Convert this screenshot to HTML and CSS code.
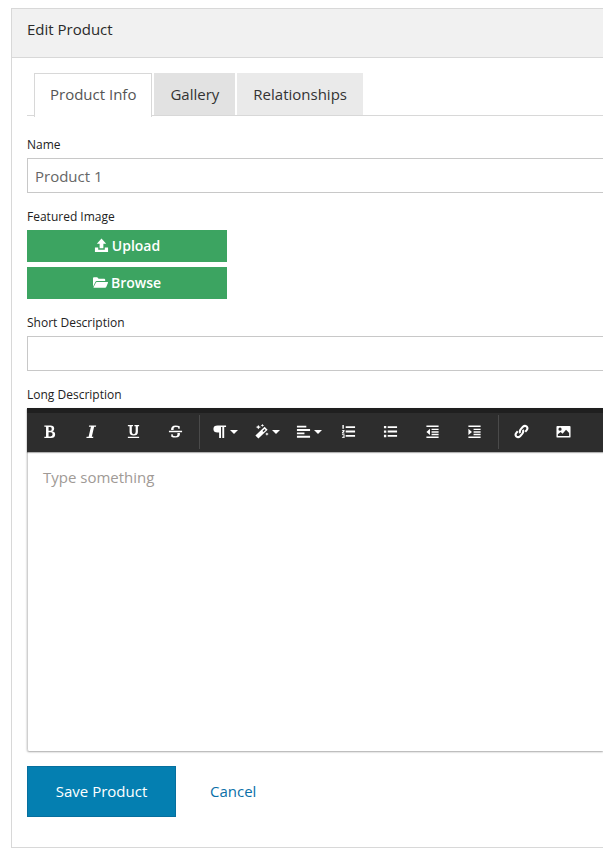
FILE: index.html
```html
<!DOCTYPE html>
<html lang="en">

<head>
  <meta charset="UTF-8" />
  <title>Edit Product</title>
  <link rel="stylesheet" href="styles.css">
</head>

<body>

  <div class="panel">
    <div class="panel-head">Edit Product</div>
    <div class="panel-body">

      <ul class="tabs">
        <li class="tab active">Product Info</li>
        <li class="tab dark">Gallery</li>
        <li class="tab">Relationships</li>
      </ul>

      <label class="field-label name-label">Name</label>
      <input class="text-input" type="text" value="Product 1">

      <label class="field-label featured-label">Featured Image</label>
      <button class="green-btn">
        <svg class="btn-icon" viewBox="0 0 16 16"><path d="M8 .5 13 6H10V11H6V6H3ZM1 10H4.500V12.500H11.500V10H15V15H1Z" fill="#fff"/></svg>
        Upload
      </button>
      <button class="green-btn second">
        <svg class="btn-icon" viewBox="0 0 16 16"><path d="M0 12.500V3.500Q0 2.500 1 2.500H4.500L6 4H12Q13 4 13 5V6.500H4Q3 6.500 2.500 7.500ZM4 7.500H15.500Q16.300 7.500 16 8.300L14 13Q13.700 13.500 13 13.500H1Q.4 13.500 .7 12.900L3 8.200Q3.300 7.500 4 7.500Z" fill="#fff"/></svg>
        Browse
      </button>

      <label class="field-label short-label">Short Description</label>
      <input class="text-input" type="text">

      <label class="field-label long-label">Long Description</label>
      <div class="editor">
        <div class="toolbar">
          <span class="tool"><svg viewBox="0 0 16 16"><path d="M2.500 1.500H9Q13 1.500 13 5Q13 7.200 11 7.800Q14 8.400 14 11.200Q14 15 9.500 15H2.500V13.500H4.300V3H2.500ZM7 3.200V7.200H8.700Q10.400 7.200 10.400 5.200Q10.400 3.200 8.700 3.200ZM7 8.800V13.300H9.200Q11.300 13.300 11.300 11Q11.300 8.800 9.200 8.800Z" fill="#fff" fill-rule="evenodd"/></svg></span>
          <span class="tool"><svg viewBox="0 0 16 16"><path d="M5.500 1.500H13L12.700 3H10.800L8.300 13.500H10L9.700 15H2.500L2.800 13.500H4.900L7.400 3H5.200Z" fill="#fff"/></svg></span>
          <span class="tool"><svg viewBox="0 0 16 16"><path d="M2 1H7.500V2.400H6.200V8.500Q6.200 10.800 8.200 10.800Q10.300 10.800 10.300 8.500V2.400H9V1H14V2.400H12.700V8.500Q12.700 12.300 8.200 12.300Q3.800 12.300 3.800 8.500V2.400H2ZM2 13.500H14V15H2Z" fill="#fff"/></svg></span>
          <span class="tool"><svg viewBox="0 0 16 16"><path d="M1 7.300H15V8.700H1ZM3.300 6.500Q2.800 1.500 8.200 1.500Q10.800 1.500 12.500 2.400V5H11L10.700 3.500Q9.500 3.100 8.200 3.100Q5.500 3.100 6 6.500ZM10 9.700H12.700Q13.300 14.500 8 14.500Q5.300 14.500 3.500 13.600V11H5L5.300 12.500Q6.600 13 8 13Q10.700 13 10 9.700Z" fill="#fff"/></svg></span>
          <span class="divider"></span>
          <span class="tool drop"><svg viewBox="0 0 16 16"><path d="M6 1.500H15V3.300H13V15H11V3.300H9.600V15H7.600V9H6Q1.500 9 1.500 5.200Q1.500 1.500 6 1.500Z" fill="#fff"/></svg><i class="caret"></i></span>
          <span class="tool drop"><svg viewBox="0 0 16 16"><path d="M11.300 3 14.500 6.200 4.700 15.500 1.500 12.300ZM11.300 5.200 9 7.400 10.100 8.500 12.400 6.300ZM4.500 1 5.700 2.700 7.500 3.200 5.700 3.900 4.500 5.500 3.600 3.900 1.800 3.200 3.600 2.700ZM9 0 9.700 1 10.800 1.500 9.700 2 9 3 8.300 2 7.200 1.500 8.300 1ZM13.800 9 14.500 10.100 15.700 10.700 14.500 11.200 13.800 12.400 13.100 11.200 11.900 10.700 13.100 10.100Z" fill="#fff" fill-rule="evenodd"/></svg><i class="caret"></i></span>
          <span class="tool drop tight"><svg viewBox="0 0 16 16"><path d="M1 1.800H11V3.800H1ZM1 5.400H15V7.400H1ZM1 9H9V11H1ZM1 12.600H15V14.600H1Z" fill="#fff"/></svg><i class="caret"></i></span>
          <span class="tool"><svg viewBox="0 0 16 16"><path d="M5 2.300H15V4.300H5ZM5 7H15V9H5ZM5 11.700H15V13.700H5ZM1.500 1H3V5H1.500ZM1 6.300H3.800V7.800L2.500 9.200H3.800V10H1V9L2.500 7.300H1ZM1 11H3.800V15H1V14.200H2.800V13.400H1.800V12.600H2.800V11.800H1Z" fill="#fff"/></svg></span>
          <span class="tool"><svg viewBox="0 0 16 16"><path d="M5 2.300H15V4.300H5ZM5 7H15V9H5ZM5 11.700H15V13.700H5ZM1 2H3.500V4.500H1ZM1 6.800H3.500V9.300H1ZM1 11.500H3.500V14H1Z" fill="#fff"/></svg></span>
          <span class="tool"><svg viewBox="0 0 16 16"><path d="M1.500 1.500H14.500V3.300H1.500ZM7 5H14.500V6.500H7ZM7 7.700H14.500V9.200H7ZM7 10.400H14.500V11.900H7ZM1.500 13.200H14.500V15H1.500ZM5.300 5V11.800L1.500 8.400Z" fill="#fff"/></svg></span>
          <span class="tool"><svg viewBox="0 0 16 16"><path d="M1.500 1.500H14.500V3.300H1.500ZM7 5H14.500V6.500H7ZM7 7.700H14.500V9.200H7ZM7 10.400H14.500V11.900H7ZM1.500 13.200H14.500V15H1.500ZM1.500 5V11.800L5.300 8.400Z" fill="#fff"/></svg></span>
          <span class="divider"></span>
          <span class="tool"><svg viewBox="0 0 16 16"><g fill="none" stroke="#fff" stroke-width="2.200"><path d="M6.800 9.500Q5.300 8 7.300 5.500L9.500 3Q11.500 1.100 13.500 2.700Q15.200 4.500 13.500 6.600L12 8.200"/><path d="M9.200 6.500Q10.700 8 8.700 10.500L6.500 13Q4.500 14.900 2.500 13.300Q.8 11.500 2.500 9.400L4 7.800"/></g></svg></span>
          <span class="tool"><svg viewBox="0 0 16 16"><path d="M1.500 2H14.500Q15.500 2 15.500 3V13.500Q15.500 14.500 14.500 14.500H1.500Q.5 14.500 .5 13.500V3Q.5 2 1.500 2ZM2 12.800H14V9.500L10.700 6 7 10.300 5 8.500 2 11ZM4.300 3.800A1.700 1.700 0 1 0 4.300 7.200A1.700 1.700 0 1 0 4.300 3.800Z" fill="#fff" fill-rule="evenodd"/></svg></span>
        </div>
        <div class="editor-body">Type something</div>
      </div>

      <div class="actions">
        <button class="save-btn">Save Product</button>
        <a class="cancel" href="#">Cancel</a>
      </div>

    </div>
  </div>

</body>

</html>
```

FILE: styles.css
```css
html,
body {
  margin: 0;
  height: 854px;
  overflow: hidden;
}

body {
  font-family: "Open Sans", sans-serif;
  background: #fff;
  color: #222;
  padding: 8px 0 0 11px;
  box-sizing: border-box;
}

.panel {
  height: 840px;
  box-sizing: border-box;
  border: 1px solid #d8d8d8;
  border-right: none;
}

.panel-head {
  height: 48px;
  line-height: 41px;
  padding-left: 15px;
  font-size: 15px;
  background: #f1f1f1;
  border-bottom: 1px solid #d8d8d8;
  color: #2a2a2a;
}

.panel-body {
  padding: 15px 0 0 15px;
}

.tabs {
  list-style: none;
  margin: 0;
  padding: 0 0 0 7px;
  display: flex;
  gap: 2px;
  height: 43px;
  box-sizing: border-box;
  border-bottom: 1px solid #d8d8d8;
}

.tab {
  height: 42px;
  line-height: 42px;
  padding: 0 16px;
  font-size: 15px;
  background: #eaeaea;
  color: #333;
}

.tab.dark {
  background: #e2e2e2;
}

.tab.active {
  height: 43px;
  padding: 0 15px;
  background: #fff;
  border: 1px solid #d8d8d8;
  border-bottom: none;
  line-height: 41px;
  color: #555;
}

.field-label {
  display: block;
  font-size: 12px;
  line-height: 14px;
  padding-top: 1px;
  color: #222;
}

.name-label {
  margin-top: 21px;
  margin-bottom: 6px;
}

.featured-label,
.short-label,
.long-label {
  margin-top: 16px;
  margin-bottom: 6px;
}

.text-input {
  display: block;
  width: 100%;
  height: 35px;
  box-sizing: border-box;
  border: 1px solid #c8c8c8;
  border-right: none;
  padding: 0 7px;
  font-family: inherit;
  font-size: 15px;
  color: #666;
  outline: none;
}

.green-btn {
  display: flex;
  align-items: center;
  justify-content: center;
  gap: 3px;
  width: 200px;
  height: 32px;
  border: none;
  padding: 0 0 2px;
  background: #3ca461;
  color: #fff;
  font-family: inherit;
  font-size: 14px;
  font-weight: 600;
}

.green-btn.second {
  margin-top: 5px;
}

.btn-icon {
  width: 15px;
  height: 15px;
}

.editor {
  height: 343px;
  box-sizing: border-box;
  border-left: 1px solid #d0d0d0;
  box-shadow: 0 1px 2px rgba(0, 0, 0, 0.35);
  border-radius: 0 0 0 2px;
}

.toolbar {
  display: flex;
  align-items: center;
  height: 44px;
  box-sizing: border-box;
  background: #2d2d2d;
  border-top: 5px solid #1f1f1f;
  box-shadow: 0 1px 1px rgba(0, 0, 0, 0.3);
  margin-left: -1px;
  padding: 0 0 2px 1px;
}

.tool {
  display: flex;
  align-items: center;
  justify-content: center;
  flex: none;
  width: 42px;
  height: 36px;
}

.tool svg {
  width: 15px;
  height: 15px;
}

.tool.drop {
  gap: 3px;
}

.tool.tight {
  margin-right: -3px;
}

.caret {
  width: 0;
  height: 0;
  border-left: 4px solid transparent;
  border-right: 4px solid transparent;
  border-top: 4px solid #fff;
}

.divider {
  flex: none;
  width: 1px;
  height: 34px;
  margin: 0 4px 0 3px;
  background: #4a4a4a;
}

.divider + .tool:not(.drop) {
  margin-left: -3px;
}

.editor-body {
  padding: 15px;
  font-size: 15px;
  line-height: 21px;
  color: #a09a96;
}

.actions {
  display: flex;
  align-items: center;
  margin-top: 15px;
}

.save-btn {
  width: 149px;
  height: 51px;
  border: 1px solid #066f9e;
  background: #047fb1;
  color: #fff;
  font-family: inherit;
  font-size: 15px;
  font-weight: 500;
  padding: 0 0 2px;
}

.cancel {
  margin-left: 34px;
  margin-top: -2px;
  font-size: 15px;
  color: #0a70a8;
  text-decoration: none;
}
```
